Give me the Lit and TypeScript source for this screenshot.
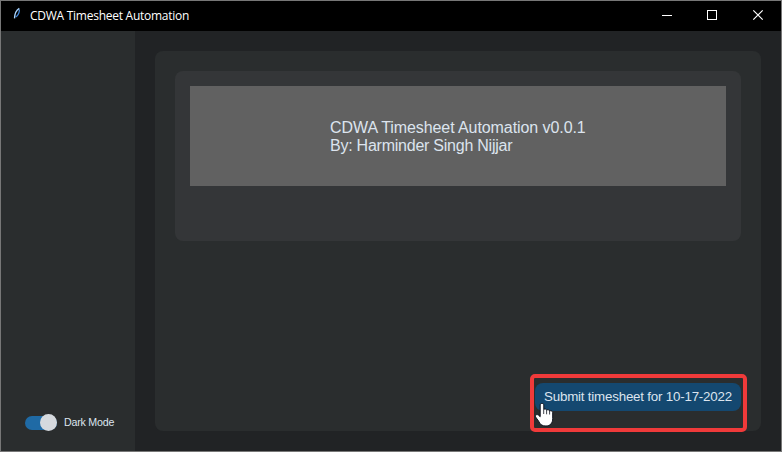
import { LitElement, html, css } from "lit";
import { customElement, state } from "lit/decorators.js";
import { classMap } from "lit/directives/class-map.js";

@customElement("title-bar")
class TitleBar extends LitElement {
  static styles = css`
    :host {
      display: flex;
      align-items: center;
      height: 30px;
      box-sizing: border-box;
      padding-left: 11px;
      background: #000;
      color: #fff;
    }
    .logo {
      width: 10px;
      height: 14px;
      flex: none;
      margin: -4px 8px 0 0;
    }
    .title {
      flex: 1;
      font: 12px/30px "Open Sans", "Noto Sans", sans-serif;
      letter-spacing: -0.26px;
      white-space: nowrap;
    }
    .control {
      width: 45px;
      height: 30px;
      display: block;
    }
    .control:last-child {
      width: 46px;
    }
  `;

  render() {
    return html`
      <svg class="logo" viewBox="0 0 10 14">
        <path d="M7.400 2.400C7.400 5.500 6 8.400 3.800 10" fill="none" stroke="#3f86d8" stroke-width="1.300" />
        <path d="M7.300 1.400C4.600 3 2.700 6.400 2.500 11.400" fill="none" stroke="#a8d4ff" stroke-width="1.300" />
      </svg>
      <span class="title">CDWA Timesheet Automation</span>
      <svg class="control" viewBox="0 0 45 30"><path d="M17 14.500h10" stroke="#fff" /></svg>
      <svg class="control" viewBox="0 0 45 30">
        <rect x="17.500" y="9.500" width="9" height="9" fill="none" stroke="#fff" />
      </svg>
      <svg class="control" viewBox="0 0 46 30">
        <path d="M18.300 9.300l9.400 9.400M27.700 9.300l-9.400 9.400" fill="none" stroke="#fff" stroke-width="1.200" />
      </svg>
    `;
  }
}

@customElement("mode-switch")
class ModeSwitch extends LitElement {
  static styles = css`
    :host {
      display: flex;
      align-items: center;
      gap: 7px;
      height: 18px;
    }
    .track {
      display: flex;
      align-items: center;
      width: 32px;
      height: 14px;
      border-radius: 7px;
      background: #4a4d50;
    }
    .track.on {
      justify-content: flex-end;
      background: #1f6aa5;
    }
    .knob {
      flex: none;
      width: 17px;
      height: 17px;
      margin-bottom: 1px;
      border-radius: 50%;
      background: #d5d9de;
    }
    .text {
      margin-bottom: 2px;
      font: 10.67px/18px "Liberation Sans", sans-serif;
      letter-spacing: -0.22px;
      color: #dce4ee;
      white-space: nowrap;
    }
  `;

  @state() private on = true;

  render() {
    return html`
      <div class=${classMap({ track: true, on: this.on })} @click=${() => (this.on = !this.on)}>
        <div class="knob"></div>
      </div>
      <span class="text">Dark Mode</span>
    `;
  }
}

@customElement("app-root")
class AppRoot extends LitElement {
  static styles = css`
    :host {
      display: flex;
      flex-direction: column;
      box-sizing: border-box;
      width: 782px;
      height: 452px;
      border: 1px solid #777;
      background: #212325;
      font-family: "Liberation Sans", Arial, sans-serif;
      overflow: hidden;
    }
    .body {
      flex: 1;
      display: flex;
      min-height: 0;
    }
    .sidebar {
      width: 134px;
      box-sizing: border-box;
      display: flex;
      flex-direction: column;
      justify-content: flex-end;
      padding: 0 0 19px 24px;
      background: #2a2d2e;
    }
    .content {
      flex: 1;
      margin: 20px;
      box-sizing: border-box;
      padding: 20px;
      display: flex;
      flex-direction: column;
      justify-content: space-between;
      border-radius: 8px;
      background: #2a2d2e;
    }
    .card {
      height: 170px;
      box-sizing: border-box;
      padding: 15px;
      border-radius: 8px;
      background: #343638;
    }
    .about {
      display: flex;
      flex-direction: column;
      height: 100px;
      box-sizing: border-box;
      padding: 33px 0 0 140px;
      background: #616161;
      color: #dce4ee;
      font-size: 16px;
      line-height: 18px;
      white-space: nowrap;
    }
    .name {
      letter-spacing: -0.08px;
    }
    .author {
      letter-spacing: -0.24px;
    }
    .action {
      align-self: flex-end;
      position: relative;
    }
    .submit {
      display: block;
      width: 206px;
      height: 28px;
      padding: 0;
      border: 0;
      border-radius: 8px;
      background: #144870;
      color: #dce4ee;
      font: 13.33px/28px "Liberation Sans", Arial, sans-serif;
      letter-spacing: -0.2px;
      white-space: nowrap;
    }
    .highlight {
      position: absolute;
      inset: -9px -6px -21px -5px;
      border: 4px solid #f03a3a;
      border-radius: 5px;
      pointer-events: none;
    }
    .pointer {
      position: absolute;
      left: -1px;
      top: 19px;
      width: 20px;
      height: 26px;
    }
  `;

  render() {
    return html`
      <title-bar></title-bar>
      <div class="body">
        <div class="sidebar"><mode-switch></mode-switch></div>
        <div class="content">
          <div class="card">
            <div class="about">
              <span class="name">CDWA Timesheet Automation v0.0.1</span>
              <span class="author">By: Harminder Singh Nijjar</span>
            </div>
          </div>
          <div class="action">
            <button class="submit">Submit timesheet for 10-17-2022</button>
            <div class="highlight"></div>
            <svg class="pointer" viewBox="0 0 20 26">
              <path
                d="M6.200 3C6.200 .900 9.800 .900 9.800 3V7.500C10.500 6.500 12.600 7 12.600 8.300C13.300 7.300 15.600 7.600 15.600 9C16.500 8.300 18.700 9 18.700 10.600V16.500C18.700 21 16.300 24 12 24C7.800 24 6.300 22.500 4.500 19L1.600 15C.800 13 3 11.800 4.600 13.200L6.200 14.700Z"
                fill="#fff" stroke="#10141f" stroke-width="1" stroke-linejoin="round"
              />
              <path d="M9.700 7.500v4.500M12.600 8.300v4M15.600 9v3.500" fill="none" stroke="#10141f" stroke-width=".8" />
            </svg>
          </div>
        </div>
      </div>
    `;
  }
}
